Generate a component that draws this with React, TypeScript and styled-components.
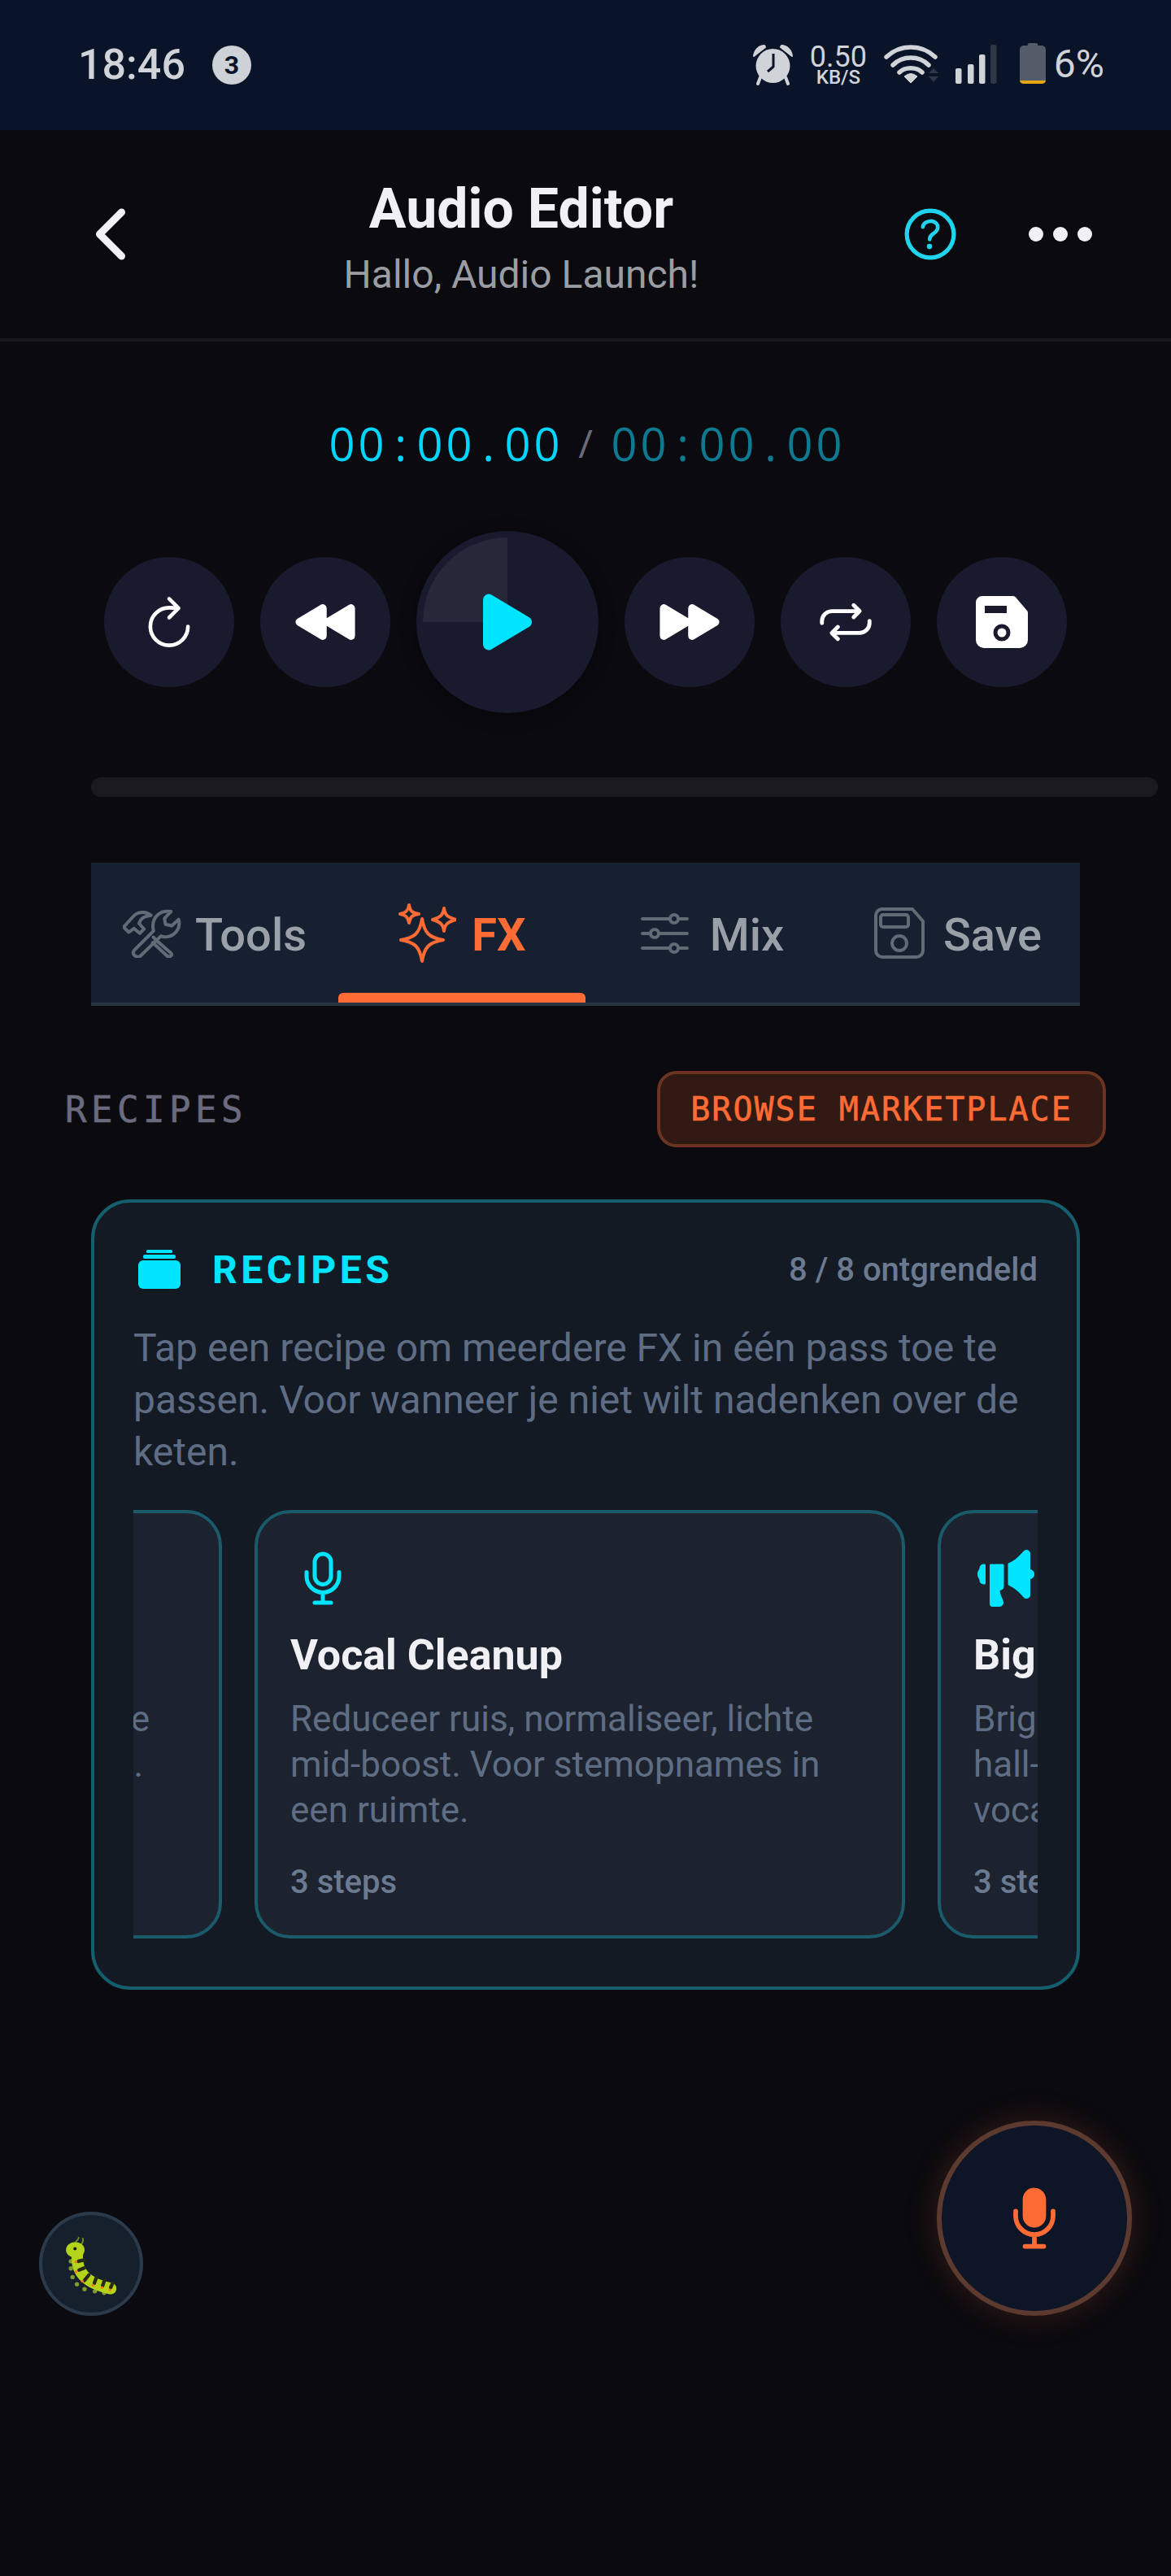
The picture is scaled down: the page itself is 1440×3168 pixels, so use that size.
import React from "react";
import styled, { createGlobalStyle } from "styled-components";
import {
  IoChevronBack,
  IoEllipsisHorizontal,
  IoHelpCircleOutline,
  IoMegaphone,
  IoMic,
  IoMicOutline,
  IoPlay,
  IoPlayBack,
  IoPlayForward,
  IoRefreshOutline,
  IoRepeatOutline,
} from "react-icons/io5";

const GlobalStyle = createGlobalStyle`
  html, body {
    margin: 0;
    padding: 0;
    background: #0a0a0f;
    font-family: Roboto, "Liberation Sans", sans-serif;
  }
  * {
    box-sizing: border-box;
  }
`;

const MONO = `"DejaVu Sans Mono", "Liberation Mono", monospace`;

const AlarmIcon = () => (
  <svg width="49" height="50" viewBox="0 0 49 50">
    <path d="M1 14 C2 6 8 1 14 1 L15 3 Z" fill="#d0d3d8" stroke="#d0d3d8" strokeWidth="2" strokeLinejoin="round" />
    <path d="M48 14 C47 6 41 1 35 1 L34 3 Z" fill="#d0d3d8" stroke="#d0d3d8" strokeWidth="2" strokeLinejoin="round" />
    <circle cx="24.5" cy="26" r="21" fill="#d0d3d8" />
    <path d="M9 40 L6 48 M40 40 L43 48" stroke="#d0d3d8" strokeWidth="4" strokeLinecap="round" />
    <path d="M25 11 V27 L18 33" fill="none" stroke="#0a1428" strokeWidth="3" strokeLinejoin="round" />
  </svg>
);

const WifiIcon = () => (
  <svg width="68" height="48" viewBox="0 0 68 48">
    <g fill="none" stroke="#d0d3d8" strokeWidth="5.5" strokeLinecap="round">
      <path d="M3 15 C20 -1 46 -1 63 15" />
      <path d="M11 25 C23 13 43 13 55 25" />
      <path d="M19 34 C26 27 40 27 47 34" />
    </g>
    <path d="M25 39 Q33 32 41 39 L33 47 Z" fill="#d0d3d8" stroke="#d0d3d8" strokeWidth="1" strokeLinejoin="round" />
    <path d="M55 35 L61 29 L67 35 Z M55 39 L67 39 L61 46 Z" fill="#2f3747" />
  </svg>
);

const SignalIcon = () => (
  <svg width="52" height="48" viewBox="0 0 52 48">
    <rect x="0" y="29" width="7.5" height="19" rx="2" fill="#d0d3d8" />
    <rect x="15" y="24" width="7.5" height="24" rx="2" fill="#d0d3d8" />
    <rect x="29" y="12" width="7.5" height="36" rx="2" fill="#d0d3d8" />
    <rect x="43" y="0" width="7.5" height="48" rx="2" fill="#2f3747" />
  </svg>
);

const BatteryIcon = () => (
  <svg width="32" height="51" viewBox="0 0 32 51">
    <path
      d="M10 4 a2 2 0 0 1 2 -3 h8 a2 2 0 0 1 2 3 h5 a5 5 0 0 1 5 5 V46 a5 5 0 0 1 -5 5 H5 a5 5 0 0 1 -5 -5 V9 a5 5 0 0 1 5 -5 z"
      fill="#545b69"
    />
    <path d="M0 47 H32 a5 4 0 0 1 -5 4 H5 a5 4 0 0 1 -5 -4 z" fill="#e8a512" />
  </svg>
);

const ToolsIcon = () => (
  <svg width="72" height="60" viewBox="0 0 215 177">
    <g fill="none" stroke="#5f6b75" strokeWidth="12" strokeLinejoin="round" strokeLinecap="round">
      <path d="M42 150 L113 79 C105 50 116 22 145 10 C155 6 165 6 177 8 L153 33 L157 55 L180 60 L205 37 C214 66 195 94 167 100 C157 102 147 101 140 98 L66 170 C58 176 48 174 42 168 C37 162 37 156 42 150 Z" />
      <path d="M3 65 L22 84 L41 70 L62 88 L78 72 L60 52 C65 32 80 24 104 22 C88 8 62 6 42 22 Z" />
      <path d="M112 102 L128 118 M128 118 L178 162 C184 168 172 176 164 172 L110 122" />
    </g>
  </svg>
);

const SparkIcon = () => (
  <svg width="72" height="73" viewBox="-2 0 72 73">
    <g fill="none" stroke="#ff6b35" strokeWidth="4" strokeLinejoin="round">
      <path d="M28 19 C31 36 36 42 54 45 C36 48 31 54 28 71 C25 54 20 48 2 45 C20 42 25 36 28 19 Z" />
      <path d="M11 2 C12 9 15 12 23 13 C15 14 12 17 11 24 C10 17 7 14 -0 13 C7 12 10 9 11 2 Z" transform="translate(1 0)" />
      <path d="M55 6 C56 14 59 17 70 20 C59 23 56 26 55 34 C54 26 51 23 41 20 C51 17 54 14 55 6 Z" />
    </g>
  </svg>
);

const SlidersIcon = () => (
  <svg width="59" height="50" viewBox="0 0 59 50">
    <g stroke="#5f6b75" strokeWidth="4" strokeLinecap="round">
      <path d="M2 7 H57 M2 25 H57 M2 43 H57" />
      <circle cx="41" cy="7" r="5" fill="#162030" />
      <circle cx="17" cy="25" r="5" fill="#162030" />
      <circle cx="41" cy="43" r="5" fill="#162030" />
    </g>
  </svg>
);

const DiskOutlineIcon = () => (
  <svg width="62" height="63" viewBox="0 0 62 63">
    <g fill="none" stroke="#5f6b75" strokeWidth="4" strokeLinejoin="round">
      <path d="M9 2 H47 L60 17 V53 a8 8 0 0 1 -8 8 H10 a8 8 0 0 1 -8 -8 V10 a8 8 0 0 1 7 -8 z" />
      <rect x="8" y="9" width="34" height="15" rx="3" />
      <circle cx="31" cy="44" r="9" />
    </g>
  </svg>
);

const DiskFilledIcon = () => (
  <svg width="64" height="64" viewBox="0 0 64 64">
    <path
      d="M8 0 H46 a4 4 0 0 1 3 1.5 L63 18 a4 4 0 0 1 1 3 V54 a10 10 0 0 1 -10 10 H10 a10 10 0 0 1 -10 -10 V8 a8 8 0 0 1 8 -8 z"
      fill="#fff"
    />
    <rect x="11" y="12" width="27" height="9" fill="#1a1a2e" />
    <circle cx="32" cy="45" r="8" fill="#fff" stroke="#1a1a2e" strokeWidth="5" />
  </svg>
);

const JarIcon = () => (
  <svg width="52" height="48" viewBox="0 0 52 48">
    <rect x="10" y="0" width="32" height="4" rx="1.5" fill="#00e5ff" />
    <rect x="6" y="6" width="40" height="5" rx="2" fill="#00e5ff" />
    <rect x="0" y="13" width="52" height="35" rx="6" fill="#00e5ff" />
  </svg>
);

const BugIcon = () => (
  <svg width="128" height="128" viewBox="25 60 382 382">
    <path d="M160 170 Q172 158 170 155 M178 180 Q190 170 185 158" fill="none" stroke="#6e8a24" strokeWidth="6" strokeLinecap="round" />
    <g fill="#7f9a2e">
      <circle cx="142" cy="242" r="8" />
      <circle cx="142" cy="268" r="8" />
      <circle cx="148" cy="300" r="8" />
      <circle cx="164" cy="326" r="8" />
      <circle cx="192" cy="344" r="8" />
      <circle cx="230" cy="352" r="8" />
      <circle cx="264" cy="358" r="8" />
    </g>
    <path d="M166 215 C160 275 190 322 288 342" fill="none" stroke="#b4d41c" strokeWidth="42" strokeLinecap="round" />
    <ellipse cx="158" cy="200" rx="34" ry="29" fill="#b4d41c" />
    <circle cx="157" cy="196" r="6" fill="#1a1a12" />
    <g fill="none" stroke="#2a2a14" strokeWidth="13" strokeLinecap="round">
      <path d="M170 242 L190 237" />
      <path d="M172 274 L192 266" />
      <path d="M192 312 L208 292" />
      <path d="M228 322 L236 300" />
      <path d="M258 332 L266 310" />
      <path d="M288 338 L295 322" />
    </g>
    <g fill="#ff7a1a">
      <circle cx="160" cy="244" r="5" />
      <circle cx="161" cy="280" r="5" />
      <circle cx="184" cy="315" r="5" />
      <circle cx="223" cy="330" r="5" />
      <circle cx="256" cy="338" r="5" />
      <circle cx="285" cy="347" r="5" />
    </g>
  </svg>
);

const Clock = ({ value, $dim }: { value: string; $dim?: boolean }) => (
  <ClockValue $dim={$dim}>
    {value.split("").map((ch, i) => (
      <ClockCell key={i}>{ch}</ClockCell>
    ))}
  </ClockValue>
);

export default function App() {
  return (
    <Page>
      <GlobalStyle />
      <StatusBar>
        <StatusLeft>
          <StatusTime>18:46</StatusTime>
          <StatusBadge>3</StatusBadge>
        </StatusLeft>
        <StatusRight>
          <AlarmIcon />
          <NetSpeed>
            <NetValue>0.50</NetValue>
            <NetUnit>KB/S</NetUnit>
          </NetSpeed>
          <WifiIcon />
          <SignalIcon />
          <BatteryPart>
            <BatteryIcon />
            <BatteryText>6%</BatteryText>
          </BatteryPart>
        </StatusRight>
      </StatusBar>

      <Header>
        <HeaderButton>
          <IoChevronBack size={96} color="#f0f0f5" />
        </HeaderButton>
        <HeaderTitles>
          <Title>Audio Editor</Title>
          <Subtitle>Hallo, Audio Launch!</Subtitle>
        </HeaderTitles>
        <HeaderActions>
          <IoHelpCircleOutline size={84} color="#22d3ee" />
          <IoEllipsisHorizontal size={96} color="#f0f0f5" />
        </HeaderActions>
      </Header>

      <TimerRow>
        <Clock value="00:00.00" />
        <TimerSlash>/</TimerSlash>
        <Clock value="00:00.00" $dim />
      </TimerRow>

      <Transport>
        <RoundButton>
          <IoRefreshOutline size={74} color="#fff" />
        </RoundButton>
        <RoundButton>
          <IoPlayBack size={78} color="#fff" />
        </RoundButton>
        <RoundButton $primary>
          <PlayShine />
          <PlayGlyph>
            <IoPlay size={96} color="#00e5ff" />
          </PlayGlyph>
        </RoundButton>
        <RoundButton>
          <IoPlayForward size={78} color="#fff" />
        </RoundButton>
        <RoundButton>
          <IoRepeatOutline size={78} color="#fff" />
        </RoundButton>
        <RoundButton>
          <DiskFilledIcon />
        </RoundButton>
      </Transport>

      <ProgressTrack />

      <Tabs>
        <Tab $gap={17}>
          <ToolsIcon />
          <TabLabel>Tools</TabLabel>
        </Tab>
        <Tab $gap={19}>
          <SparkIcon />
          <TabLabel $active>FX</TabLabel>
          <TabMarker />
        </Tab>
        <Tab $gap={26} $nudge={8}>
          <SlidersIcon />
          <TabLabel>Mix</TabLabel>
        </Tab>
        <Tab $gap={23} $nudge={4}>
          <DiskOutlineIcon />
          <TabLabel>Save</TabLabel>
        </Tab>
      </Tabs>

      <SectionRow>
        <SectionLabel>RECIPES</SectionLabel>
        <MarketButton>BROWSE MARKETPLACE</MarketButton>
      </SectionRow>

      <RecipesCard>
        <CardHeader>
          <CardHeading>
            <JarIcon />
            <CardTitle>RECIPES</CardTitle>
          </CardHeading>
          <CardCount>8 / 8 ontgrendeld</CardCount>
        </CardHeader>
        <CardText>
          Tap een recipe om meerdere FX in één pass toe te passen. Voor wanneer
          je niet wilt nadenken over de keten.
        </CardText>
        <Scroller>
          <RecipeTrack>
            <RecipeTile>
              <TileIcon />
              <TileTitle>Podcast Voice</TileTitle>
              <TileDesc $alignEnd>
                Warme stem, lichte compressie
                <TileTail>en minder pieken.</TileTail>
              </TileDesc>
              <TileSteps>3 steps</TileSteps>
            </RecipeTile>
            <RecipeTile>
              <TileIcon>
                <IoMicOutline size={80} color="#00e5ff" />
              </TileIcon>
              <TileTitle>Vocal Cleanup</TileTitle>
              <TileDesc>
                Reduceer ruis, normaliseer, lichte mid-boost. Voor stemopnames
                in een ruimte.
              </TileDesc>
              <TileSteps>3 steps</TileSteps>
            </RecipeTile>
            <RecipeTile>
              <TileIcon>
                <IoMegaphone size={80} color="#00e5ff" />
              </TileIcon>
              <TileTitle>Big Stage</TileTitle>
              <TileDesc>
                Brighte top-end, ruime
                <br />
                hall-reverb en lagen op je
                <br />
                vocals voor een groot geluid.
              </TileDesc>
              <TileSteps>3 steps</TileSteps>
            </RecipeTile>
          </RecipeTrack>
        </Scroller>
      </RecipesCard>

      <BugButton>
        <BugIcon />
      </BugButton>
      <MicFab>
        <IoMic size={92} color="#ff6b35" />
      </MicFab>
    </Page>
  );
}

const Page = styled.div`
  position: relative;
  width: 1440px;
  min-height: 3168px;
  overflow: hidden;
  background: #0a0a0f;
`;

const StatusBar = styled.div`
  height: 160px;
  padding: 52px 82px 0 96px;
  display: flex;
  justify-content: space-between;
  align-items: flex-start;
  background: #0a1428;
  color: #d0d3d8;
`;

const StatusLeft = styled.div`
  display: flex;
  align-items: center;
  gap: 33px;
  padding-top: 4px;
`;

const StatusTime = styled.span`
  font-size: 52px;
  line-height: 48px;
  font-weight: 500;
`;

const StatusBadge = styled.span`
  width: 48px;
  height: 48px;
  border-radius: 50%;
  display: flex;
  align-items: center;
  justify-content: center;
  background: #ced1d6;
  color: #0a1428;
  font-size: 32px;
  font-weight: 700;
`;

const StatusRight = styled.div`
  display: flex;
  align-items: flex-start;
  padding-top: 3px;
  gap: 20px;
`;

const NetSpeed = styled.div`
  width: 72px;
  display: flex;
  flex-direction: column;
  align-items: center;
`;

const NetValue = styled.span`
  font-size: 36px;
  line-height: 30px;
  font-weight: 400;
`;

const NetUnit = styled.span`
  font-size: 24px;
  line-height: 20px;
  font-weight: 500;
`;

const BatteryPart = styled.div`
  display: flex;
  align-items: flex-end;
  gap: 10px;
  margin-left: 7px;
  margin-top: -3px;
`;

const BatteryText = styled.span`
  font-size: 48px;
  line-height: 50px;
  margin-bottom: -1px;
`;

const Header = styled.div`
  height: 260px;
  padding: 0 88px;
  display: flex;
  align-items: center;
  border-bottom: 4px solid #18181f;
`;

const HeaderButton = styled.div`
  width: 96px;
  height: 96px;
  display: flex;
`;

const HeaderTitles = styled.div`
  flex: 1;
  align-self: flex-start;
  padding-top: 57px;
  text-align: center;
`;

const Title = styled.div`
  font-size: 68px;
  line-height: 80px;
  font-weight: 700;
  color: #f0f0f5;
`;

const Subtitle = styled.div`
  margin-top: 9px;
  font-size: 48px;
  line-height: 64px;
  color: #9a9da3;
`;

const HeaderActions = styled.div`
  width: 254px;
  display: flex;
  align-items: center;
  justify-content: flex-end;
  gap: 70px;
`;

const TimerRow = styled.div`
  margin-top: 89px;
  height: 72px;
  display: flex;
  justify-content: center;
  align-items: center;
`;

const ClockValue = styled.div<{ $dim?: boolean }>`
  display: flex;
  font-family: "Open Sans", sans-serif;
  font-size: 56px;
  line-height: 72px;
  color: ${(p) => (p.$dim ? "#0d7a92" : "#00d4ff")};
`;

const ClockCell = styled.span`
  width: 36px;
  text-align: center;
`;

const TimerSlash = styled.span`
  width: 59px;
  text-align: center;
  font-family: "Open Sans", sans-serif;
  font-size: 48px;
  line-height: 72px;
  color: #6b6b7b;
`;

const Transport = styled.div`
  margin-top: 72px;
  display: flex;
  justify-content: center;
  align-items: center;
  gap: 32px;
`;

const RoundButton = styled.div<{ $primary?: boolean }>`
  position: relative;
  width: ${(p) => (p.$primary ? "224px" : "160px")};
  height: ${(p) => (p.$primary ? "224px" : "160px")};
  border-radius: 50%;
  display: flex;
  align-items: center;
  justify-content: center;
  background: #1a1a2e;
  ${(p) => p.$primary && "box-shadow: 0 4px 20px rgba(0, 0, 0, 0.35);"}
`;

const PlayShine = styled.div`
  position: absolute;
  left: 8px;
  top: 8px;
  width: 104px;
  height: 104px;
  border-top-left-radius: 104px;
  background: rgba(255, 255, 255, 0.06);
`;

const PlayGlyph = styled.div`
  position: relative;
  display: flex;
`;

const ProgressTrack = styled.div`
  margin: 79px 16px 0 112px;
  height: 24px;
  border-radius: 12px;
  background: #1a1a20;
`;

const Tabs = styled.div`
  margin: 81px 112px 0;
  height: 176px;
  display: flex;
  background: #162030;
  border-bottom: 4px solid #2a3441;
`;

const Tab = styled.div<{ $gap: number; $nudge?: number }>`
  position: relative;
  flex: 0 0 304px;
  display: flex;
  align-items: center;
  justify-content: center;
  gap: ${(p) => p.$gap}px;
  padding: 1px 0 0 ${(p) => p.$nudge ?? 0}px;
`;

const TabLabel = styled.span<{ $active?: boolean }>`
  padding-top: 4px;
  font-size: 56px;
  line-height: 72px;
  font-weight: ${(p) => (p.$active ? 700 : 500)};
  color: ${(p) => (p.$active ? "#ff6b35" : "#9aa0a8")};
`;

const TabMarker = styled.div`
  position: absolute;
  left: 0;
  right: 0;
  bottom: 0;
  height: 12px;
  border-radius: 6px 6px 0 0;
  background: #ff6b35;
`;

const SectionRow = styled.div`
  margin-top: 80px;
  padding: 0 80px;
  display: flex;
  justify-content: space-between;
  align-items: center;
`;

const SectionLabel = styled.span`
  font-family: ${MONO};
  font-size: 44px;
  letter-spacing: 5.5px;
  -webkit-text-stroke: 0.6px #6b6b80;
  color: #6b6b80;
`;

const MarketButton = styled.div`
  width: 552px;
  height: 94px;
  display: flex;
  align-items: center;
  justify-content: center;
  font-family: ${MONO};
  font-size: 40px;
  letter-spacing: 2px;
  -webkit-text-stroke: 0.6px #ff6b35;
  color: #ff6b35;
  background: #311a14;
  border: 4px solid #6a3322;
  border-radius: 24px;
`;

const RecipesCard = styled.div`
  margin: 64px 112px 0;
  height: 972px;
  padding: 48px;
  background: #131a24;
  border: 4px solid #155e6e;
  border-radius: 48px;
`;

const CardHeader = styled.div`
  height: 68px;
  display: flex;
  justify-content: space-between;
  align-items: center;
`;

const CardHeading = styled.div`
  display: flex;
  align-items: center;
  gap: 39px;
  padding-left: 6px;
`;

const CardTitle = styled.span`
  font-size: 48px;
  font-weight: 700;
  letter-spacing: 4.5px;
  color: #00e5ff;
`;

const CardCount = styled.span`
  font-size: 40px;
  font-weight: 500;
  color: #6b7a90;
`;

const CardText = styled.p`
  margin: 31px 0 0;
  font-size: 48px;
  line-height: 64px;
  color: #5f6d84;
`;

const Scroller = styled.div`
  margin-top: 39px;
  overflow: hidden;
`;

const RecipeTrack = styled.div`
  display: flex;
  gap: 40px;
  width: max-content;
  margin-left: -691px;
`;

const RecipeTile = styled.div`
  width: 800px;
  height: 527px;
  padding: 40px;
  background: #1c232e;
  border: 4px solid #1a5a6a;
  border-radius: 44px;
`;

const TileIcon = styled.div`
  width: 80px;
  height: 80px;
  display: flex;
`;

const TileTitle = styled.div`
  margin-top: 21px;
  font-size: 52px;
  line-height: 68px;
  font-weight: 700;
  white-space: nowrap;
  color: #f0f0f5;
`;

const TileDesc = styled.div<{ $alignEnd?: boolean }>`
  margin-top: 16px;
  height: 168px;
  font-size: 44px;
  line-height: 56px;
  white-space: ${(p) => (p.$alignEnd ? "nowrap" : "normal")};
  text-align: ${(p) => (p.$alignEnd ? "right" : "left")};
  padding-right: ${(p) => (p.$alignEnd ? "45px" : "0")};
  color: #5f6d84;
`;

const TileTail = styled.span`
  display: block;
  padding-right: 8px;
`;

const TileSteps = styled.div`
  margin-top: 35px;
  font-size: 40px;
  line-height: 52px;
  font-weight: 500;
  white-space: nowrap;
  color: #6b7a90;
`;

const BugButton = styled.div`
  position: absolute;
  left: 48px;
  top: 2720px;
  width: 128px;
  height: 128px;
  border-radius: 50%;
  background: #16202c;
  box-shadow: inset 0 0 0 4px #2a3a4a;
  display: flex;
`;

const MicFab = styled.div`
  position: absolute;
  left: 1152px;
  top: 2608px;
  width: 240px;
  height: 240px;
  border-radius: 50%;
  display: flex;
  align-items: center;
  justify-content: center;
  background: #0d1526;
  border: 6px solid #5c3a30;
  box-shadow: 0 0 40px rgba(255, 107, 53, 0.18);
`;
